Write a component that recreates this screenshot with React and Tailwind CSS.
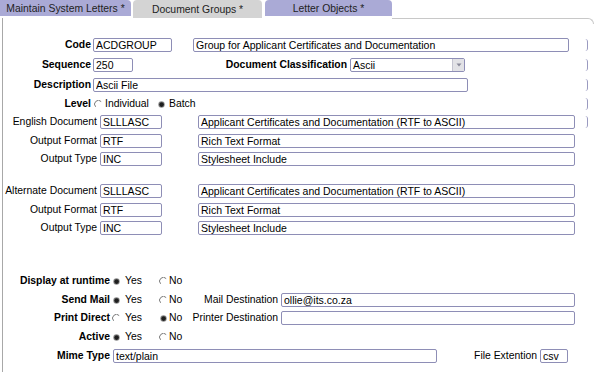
import React from "react";

function Radio({ checked }) {
  return (
    <svg width="9" height="9" viewBox="0 0 9 9" className="shrink-0">
      {checked ? (
        <>
          <circle cx="4.5" cy="4.5" r="3.2" fill="#8a8a8a" />
          <circle cx="4.6" cy="4.6" r="2.3" fill="#1e1e1e" />
        </>
      ) : (
        <path d="M7.2 1.6 A3.6 3.6 0 0 0 1.6 6.8" fill="none" stroke="#7a7a7a" strokeWidth="1" />
      )}
    </svg>
  );
}

function Field({ value = "", className = "" }) {
  return (
    <input
      readOnly
      value={value}
      className={
        "h-[14px] border border-[#8e8eb6] rounded-[2px] bg-white px-[2px] py-0 text-[10.5px] leading-[12px] text-black outline-none shrink-0 " +
        className
      }
    />
  );
}

function Bracket() {
  return <div className="ml-auto mr-[12px] w-[3px] h-[12px] border-r border-[#9a9ac0] rounded-r-[3px] shrink-0" />;
}

function Row({ className = "", children }) {
  return <div className={"flex items-center h-[14px] " + className}>{children}</div>;
}

function Label({ w, bold, children }) {
  return (
    <div className={w + " shrink-0 text-right whitespace-nowrap " + (bold ? "font-bold" : "")}>
      {children}
    </div>
  );
}

function YesNo({ yes }) {
  return (
    <>
      <div className="ml-[2px] w-[47px] flex items-center shrink-0">
        <Radio checked={yes} />
        <span className="ml-[4px]">Yes</span>
      </div>
      <div className="w-[31px] flex items-center shrink-0">
        <Radio checked={!yes} />
        <span className="ml-[1px]">No</span>
      </div>
    </>
  );
}

export default function App() {
  return (
    <div className="w-[600px] h-[372px] bg-white overflow-hidden text-black text-[10.4px] leading-[12px] font-['Liberation_Sans',Arial,sans-serif]">
      {/* Tabs */}
      <div className="flex items-start h-[18px]">
        <div className="w-[131px] h-[16px] bg-[#aaaad6] rounded-tr-[4px] flex items-center justify-center text-[#222] pt-[2px]">
          Maintain System Letters *
        </div>
        <div className="ml-[2px] w-[129px] h-[18px] bg-[#d4d4d4] rounded-t-[4px] flex items-center justify-center text-[#222] pt-[1px]">
          Document Groups *
        </div>
        <div className="ml-[3px] w-[127px] h-[16px] bg-[#aaaad6] rounded-t-[4px] flex items-center justify-center text-[#222] pt-[2px]">
          Letter Objects *
        </div>
      </div>

      {/* Panel */}
      <div className="ml-[2px] h-[354px] border-l border-[#a8a8a8]">
        <div className="h-[6px] ml-[389px] mr-[6px] border-t border-r border-[#c8c8c8] rounded-tr-[6px]" />

        <Row className="mt-[14px]">
          <Label w="w-[88px]" bold>Code</Label>
          <Field value="ACDGROUP" className="ml-[2px] w-[79px]" />
          <Field value="Group for Applicant Certificates and Documentation" className="ml-[21px] w-[376px]" />
          <Bracket />
        </Row>

        <Row className="mt-[6px]">
          <Label w="w-[88px]" bold>Sequence</Label>
          <Field value="250" className="ml-[2px] w-[40px]" />
          <Label w="w-[214px]" bold>Document Classification</Label>
          <div className="ml-[3px] w-[115px] h-[14px] border border-[#8e8eb6] rounded-[2px] flex items-center shrink-0">
            <span className="flex-1 pl-[2px] text-[10.5px]">Ascii</span>
            <div className="w-[12px] h-[12px] bg-[#e2e2e6] border-l border-[#c4c4d0] flex items-center justify-center">
              <svg width="6" height="4" viewBox="0 0 6 4">
                <path d="M0.5 0.5 L5.5 0.5 L3 3.5 Z" fill="#8a8a9a" />
              </svg>
            </div>
          </div>
          <Bracket />
        </Row>

        <Row className="mt-[6px]">
          <Label w="w-[88px]" bold>Description</Label>
          <Field value="Ascii File" className="ml-[2px] w-[375px]" />
          <Bracket />
        </Row>

        <Row className="mt-[5px]">
          <Label w="w-[88px]" bold>Level</Label>
          <div className="ml-[3px] w-[63px] flex items-center shrink-0">
            <Radio />
            <span className="ml-[2px]">Individual</span>
          </div>
          <div className="flex items-center shrink-0">
            <Radio checked />
            <span className="ml-[3px]">Batch</span>
          </div>
          <Bracket />
        </Row>

        <Row className="mt-[4px]">
          <Label w="w-[94px]">English Document</Label>
          <Field value="SLLLASC" className="ml-[3px] w-[62px]" />
          <Field value="Applicant Certificates and Documentation (RTF to ASCII)" className="ml-[36px] w-[377px]" />
          <Bracket />
        </Row>
        <Row className="mt-[5px]">
          <Label w="w-[94px]">Output Format</Label>
          <Field value="RTF" className="ml-[3px] w-[62px]" />
          <Field value="Rich Text Format" className="ml-[36px] w-[377px]" />
        </Row>
        <Row className="mt-[4px]">
          <Label w="w-[94px]">Output Type</Label>
          <Field value="INC" className="ml-[3px] w-[62px]" />
          <Field value="Stylesheet Include" className="ml-[36px] w-[377px]" />
        </Row>

        <Row className="mt-[18px]">
          <Label w="w-[94px]">Alternate Document</Label>
          <Field value="SLLLASC" className="ml-[3px] w-[62px]" />
          <Field value="Applicant Certificates and Documentation (RTF to ASCII)" className="ml-[36px] w-[377px]" />
        </Row>
        <Row className="mt-[5px]">
          <Label w="w-[94px]">Output Format</Label>
          <Field value="RTF" className="ml-[3px] w-[62px]" />
          <Field value="Rich Text Format" className="ml-[36px] w-[377px]" />
        </Row>
        <Row className="mt-[4px]">
          <Label w="w-[94px]">Output Type</Label>
          <Field value="INC" className="ml-[3px] w-[62px]" />
          <Field value="Stylesheet Include" className="ml-[36px] w-[377px]" />
        </Row>

        <Row className="mt-[39px]">
          <Label w="w-[107px]" bold>Display at runtime</Label>
          <YesNo yes />
        </Row>
        <Row className="mt-[5px]">
          <Label w="w-[107px]" bold>Send Mail</Label>
          <YesNo yes />
          <Label w="w-[88px]">Mail Destination</Label>
          <Field value="ollie@its.co.za" className="ml-[3px] w-[294px]" />
        </Row>
        <Row className="mt-[4px]">
          <Label w="w-[107px]" bold>Print Direct</Label>
          <YesNo yes={false} />
          <Label w="w-[88px]">Printer Destination</Label>
          <Field value="" className="ml-[3px] w-[294px]" />
        </Row>
        <Row className="mt-[5px]">
          <Label w="w-[107px]" bold>Active</Label>
          <YesNo yes />
        </Row>
        <Row className="mt-[5px]">
          <Label w="w-[107px]" bold>Mime Type</Label>
          <Field value="text/plain" className="ml-[3px] w-[324px]" />
          <Label w="w-[100px]">File Extention</Label>
          <Field value="csv" className="ml-[3px] w-[28px]" />
        </Row>
      </div>
    </div>
  );
}
